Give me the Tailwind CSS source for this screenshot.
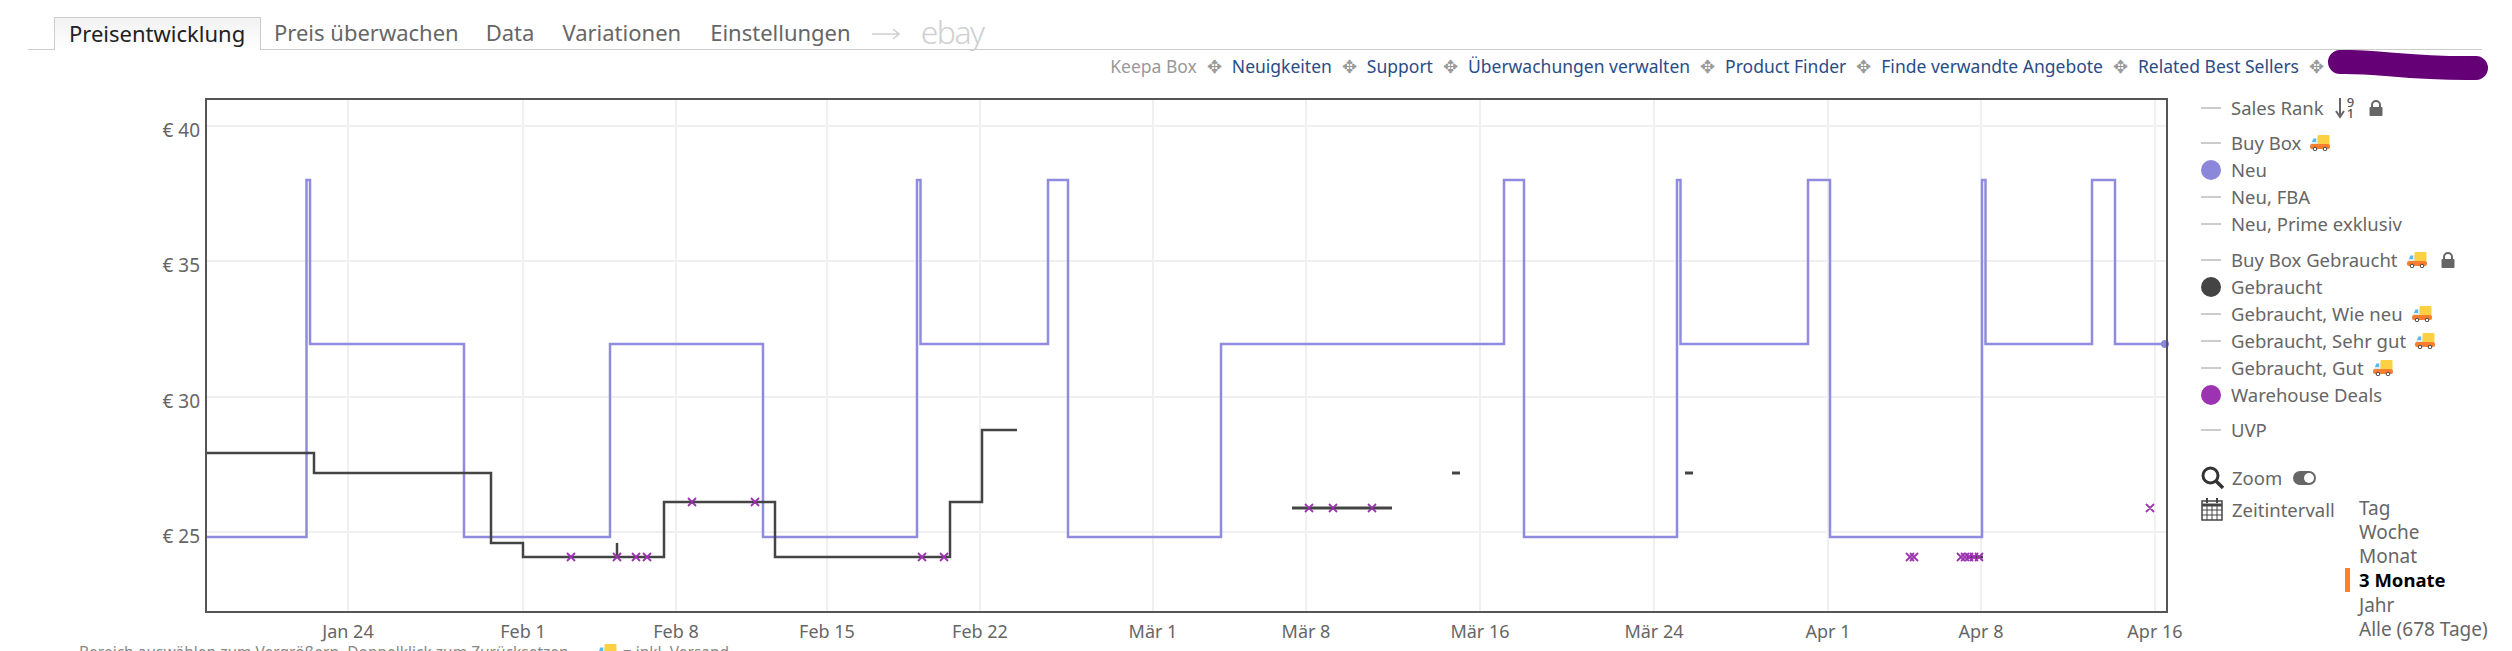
<!DOCTYPE html>
<html>
  <head>
    <title>Keepa Preisentwicklung</title>
    <script src="https://cdn.jsdelivr.net/npm/@tailwindcss/browser@4"></script>
  </head>
  <body class="h-[651px] w-[2512px] overflow-hidden bg-white font-['Noto_Sans',sans-serif] text-[#666]">
    <!-- truck and lock shared by the legend rows -->
    <svg class="hidden">
      <symbol id="truck" viewBox="0 0 20 16">
        <path d="M1 9l2-5.500h5V10H1z" fill="#d9eefa"/>
        <path d="M3.500 3.500H6V7H2z" fill="#5bb8ee"/>
        <rect x="7.500" y="0" width="12" height="9.500" rx="1" fill="#fbd143"/>
        <rect x="0" y="9" width="20" height="5" rx="2" fill="#f97f2e"/>
        <circle cx="5" cy="14" r="1.800" fill="#fff" stroke="#444"/>
        <circle cx="15" cy="14" r="1.800" fill="#fff" stroke="#444"/>
      </symbol>
      <symbol id="lock" viewBox="0 0 14 16">
        <path d="M3 7V5a4 4 0 0 1 8 0v2" fill="none" stroke="#666" stroke-width="2"/>
        <rect x="0.500" y="7" width="13" height="9" rx="1" fill="#666"/>
      </symbol>
    </svg>

    <!-- Tabs -->
    <div class="ml-[28px] mr-[30px] mt-[17px] flex h-[33px] items-end border-b border-[#ccc] text-[22px] leading-[30px]">
      <div class="ml-[26px] h-[33px] w-[207px] -mb-px border-x border-t border-[#ccc] bg-gradient-to-b from-[#f2f2f2] to-white pl-[14px] text-[#222]">Preisentwicklung</div>
      <div class="ml-[13px] h-[32px]">Preis überwachen</div>
      <div class="ml-[27px] h-[32px]">Data</div>
      <div class="ml-[28px] h-[32px]">Variationen</div>
      <div class="ml-[29px] h-[32px]">Einstellungen</div>
      <svg class="mb-[8px] ml-[21px]" width="28" height="14" viewBox="0 0 28 14"><path d="M0 7h26M21 2l6 5-6 5" fill="none" stroke="#d0d0d0" stroke-width="1.500"/></svg>
      <div class="ml-[21px] h-[32px] text-[32px] font-light tracking-[-1.500px] text-[#d0d0d0]">ebay</div>
    </div>

    <!-- Keepa links -->
    <div class="relative mr-[24px] flex h-[33px] items-center justify-end pr-[164px] text-[17.500px] text-[#2b4c87]">
      <span class="text-[#999]">Keepa Box</span>
      <span class="mx-[10px] text-[#999]">✥</span><span>Neuigkeiten</span>
      <span class="mx-[10px] text-[#999]">✥</span><span>Support</span>
      <span class="mx-[10px] text-[#999]">✥</span><span>Überwachungen verwalten</span>
      <span class="mx-[10px] text-[#999]">✥</span><span>Product Finder</span>
      <span class="mx-[10px] text-[#999]">✥</span><span>Finde verwandte Angebote</span>
      <span class="mx-[10px] text-[#999]">✥</span><span>Related Best Sellers</span>
      <span class="ml-[10px] text-[#999]">✥</span>
      <svg class="absolute right-0 top-0" width="160" height="32" viewBox="0 0 160 32"><path d="M12 12C50 11 80 19 148 18" fill="none" stroke="#660077" stroke-width="24" stroke-linecap="round"/></svg>
    </div>

    <div class="flex">
      <!-- Price graph -->
      <div class="relative h-[552px] w-[2190px] shrink-0">
        <svg class="absolute left-0 top-0" width="2190" height="552" viewBox="0 83 2190 552">
          <g stroke="#f0f0f0" stroke-width="2">
            <path d="M206 126H2167M206 261H2167M206 397H2167M206 532H2167"/>
            <path d="M348 99V612M523 99V612M676 99V612M827 99V612M980 99V612M1153 99V612M1306 99V612M1480 99V612M1654 99V612M1828 99V612M1981 99V612M2155 99V612"/>
          </g>
          <path d="M206 537H306.500V180H310V344H464V537H610V344H763V537H917V180H920.500V344H1048V180H1068V537H1221V344H1504V180H1524V537H1677V180H1680.500V344H1808V180H1830V537H1982V180H1985.500V344H2092V180H2115V344H2165" fill="none" stroke="#8f8ce0" stroke-width="2.500"/>
          <circle cx="2165" cy="344" r="4" fill="#8b88dc"/>
          <g fill="none" stroke="#444" stroke-width="2.500">
            <path d="M206 453H314V473H491V543H523V557H664V502H775V557H950V502H982V430H1017"/>
            <path d="M617 543V557"/>
            <path d="M1292 508H1392" stroke-width="3"/>
            <path d="M1452 473H1460M1685 473H1693M1967 557H1983" stroke-width="3"/>
          </g>
          <!-- warehouse deals markers -->
          <g fill="none" stroke="#9c33b0" stroke-width="1.800">
            <path d="M567 553l8 8m0-8l-8 8M613 553l8 8m0-8l-8 8M632 553l8 8m0-8l-8 8M643 553l8 8m0-8l-8 8M688 498l8 8m0-8l-8 8M751 498l8 8m0-8l-8 8M918 553l8 8m0-8l-8 8M940 553l8 8m0-8l-8 8"/>
            <path d="M1305 504l8 8m0-8l-8 8M1329 504l8 8m0-8l-8 8M1368 504l8 8m0-8l-8 8"/>
            <path d="M1906 553l8 8m0-8l-8 8M1910 553l8 8m0-8l-8 8M1957 553l8 8m0-8l-8 8M1961 553l8 8m0-8l-8 8M1965 553l8 8m0-8l-8 8M1970 553l8 8m0-8l-8 8M1975 553l8 8m0-8l-8 8M2146 504l8 8m0-8l-8 8"/>
          </g>
          <path d="M206 99H2167V612H206Z" fill="none" stroke="#555" stroke-width="2"/>
        </svg>
        <!-- axis labels sit on the chart canvas -->
        <span class="absolute right-[1990px] top-[33px] text-[19px] leading-[28px]">€ 40</span>
        <span class="absolute right-[1990px] top-[168px] text-[19px] leading-[28px]">€ 35</span>
        <span class="absolute right-[1990px] top-[304px] text-[19px] leading-[28px]">€ 30</span>
        <span class="absolute right-[1990px] top-[439px] text-[19px] leading-[28px]">€ 25</span>
        <span class="absolute left-[348px] top-[534px] -translate-x-1/2 whitespace-nowrap text-[18px] leading-[28px]">Jan 24</span>
        <span class="absolute left-[523px] top-[534px] -translate-x-1/2 whitespace-nowrap text-[18px] leading-[28px]">Feb 1</span>
        <span class="absolute left-[676px] top-[534px] -translate-x-1/2 whitespace-nowrap text-[18px] leading-[28px]">Feb 8</span>
        <span class="absolute left-[827px] top-[534px] -translate-x-1/2 whitespace-nowrap text-[18px] leading-[28px]">Feb 15</span>
        <span class="absolute left-[980px] top-[534px] -translate-x-1/2 whitespace-nowrap text-[18px] leading-[28px]">Feb 22</span>
        <span class="absolute left-[1153px] top-[534px] -translate-x-1/2 whitespace-nowrap text-[18px] leading-[28px]">Mär 1</span>
        <span class="absolute left-[1306px] top-[534px] -translate-x-1/2 whitespace-nowrap text-[18px] leading-[28px]">Mär 8</span>
        <span class="absolute left-[1480px] top-[534px] -translate-x-1/2 whitespace-nowrap text-[18px] leading-[28px]">Mär 16</span>
        <span class="absolute left-[1654px] top-[534px] -translate-x-1/2 whitespace-nowrap text-[18px] leading-[28px]">Mär 24</span>
        <span class="absolute left-[1828px] top-[534px] -translate-x-1/2 whitespace-nowrap text-[18px] leading-[28px]">Apr 1</span>
        <span class="absolute left-[1981px] top-[534px] -translate-x-1/2 whitespace-nowrap text-[18px] leading-[28px]">Apr 8</span>
        <span class="absolute left-[2155px] top-[534px] -translate-x-1/2 whitespace-nowrap text-[18px] leading-[28px]">Apr 16</span>
        <div class="absolute left-[79px] top-[558px] flex items-center whitespace-nowrap text-[15.500px] leading-[22px] text-[#888]">
          Bereich auswählen zum Vergrößern, Doppelklick zum Zurücksetzen.
          <svg class="ml-[24px] mr-[6px]" width="20" height="16"><use href="#truck"/></svg>= inkl. Versand
        </div>
      </div>

      <!-- Legend -->
      <div class="w-[322px] pl-[11px] pt-[11px] text-[18.500px] leading-[27px]">
        <div class="flex h-[27px] items-center"><i class="mr-[10px] h-[2px] w-[20px] bg-[#ccc]"></i>Sales Rank
          <svg class="ml-[10px]" width="12" height="22" viewBox="0 0 12 22"><path d="M6 1v17M2 14l4 6 4-6" fill="none" stroke="#666" stroke-width="2"/></svg>
          <span class="ml-px flex flex-col text-[13px] font-medium leading-[11px] text-[#555]"><span>9</span><span>1</span></span>
          <svg class="ml-[15px]" width="14" height="16"><use href="#lock"/></svg>
        </div>
        <div class="mt-[8px] flex h-[27px] items-center"><i class="mr-[10px] h-[2px] w-[20px] bg-[#ccc]"></i>Buy Box<svg class="ml-[9px]" width="20" height="16"><use href="#truck"/></svg></div>
        <div class="flex h-[27px] items-center"><i class="mr-[10px] h-[20px] w-[20px] rounded-full bg-[#8b88dc]"></i>Neu</div>
        <div class="flex h-[27px] items-center"><i class="mr-[10px] h-[2px] w-[20px] bg-[#ccc]"></i>Neu, FBA</div>
        <div class="flex h-[27px] items-center"><i class="mr-[10px] h-[2px] w-[20px] bg-[#ccc]"></i>Neu, Prime exklusiv</div>
        <div class="mt-[9px] flex h-[27px] items-center"><i class="mr-[10px] h-[2px] w-[20px] bg-[#ccc]"></i>Buy Box Gebraucht<svg class="ml-[9px]" width="20" height="16"><use href="#truck"/></svg><svg class="ml-[14px]" width="14" height="16"><use href="#lock"/></svg></div>
        <div class="flex h-[27px] items-center"><i class="mr-[10px] h-[20px] w-[20px] rounded-full bg-[#444]"></i>Gebraucht</div>
        <div class="flex h-[27px] items-center"><i class="mr-[10px] h-[2px] w-[20px] bg-[#ccc]"></i>Gebraucht, Wie neu<svg class="ml-[9px]" width="20" height="16"><use href="#truck"/></svg></div>
        <div class="flex h-[27px] items-center"><i class="mr-[10px] h-[2px] w-[20px] bg-[#ccc]"></i>Gebraucht, Sehr gut<svg class="ml-[9px]" width="20" height="16"><use href="#truck"/></svg></div>
        <div class="flex h-[27px] items-center"><i class="mr-[10px] h-[2px] w-[20px] bg-[#ccc]"></i>Gebraucht, Gut<svg class="ml-[9px]" width="20" height="16"><use href="#truck"/></svg></div>
        <div class="flex h-[27px] items-center"><i class="mr-[10px] h-[20px] w-[20px] rounded-full bg-[#9c33b0]"></i>Warehouse Deals</div>
        <div class="mt-[8px] flex h-[27px] items-center"><i class="mr-[10px] h-[2px] w-[20px] bg-[#ccc]"></i>UVP</div>

        <div class="mt-[21px] flex h-[27px] items-center">
          <svg class="mr-[8px] shrink-0" width="23" height="23" viewBox="0 0 23 23"><circle cx="9.500" cy="9.500" r="7.500" fill="none" stroke="#333" stroke-width="3"/><path d="M15 15l7 7" stroke="#333" stroke-width="3.500"/></svg>
          Zoom
          <span class="ml-[11px] flex h-[14px] w-[23px] items-center justify-end rounded-full bg-[#666] pr-[2px]"><i class="h-[10px] w-[10px] rounded-full bg-white"></i></span>
        </div>
        <div class="mt-[5px] flex">
          <div class="flex h-[27px] w-[158px] items-center">
            <svg class="mr-[9px] shrink-0" width="22" height="23" viewBox="0 0 22 23"><rect x="1" y="3" width="20" height="19" fill="none" stroke="#444" stroke-width="1.500"/><path d="M1 7h20" stroke="#444" stroke-width="3"/><path d="M1 12h20M1 17h20M6 8v14M11 8v14M16 8v14" stroke="#444"/><path d="M6 0v5M16 0v5" stroke="#444" stroke-width="2"/></svg>
            Zeitintervall
          </div>
          <div class="text-[19px] text-[#666]">
            <div class="h-[24px] leading-[24px]">Tag</div>
            <div class="h-[24px] leading-[24px]">Woche</div>
            <div class="h-[24px] leading-[24px]">Monat</div>
            <div class="relative h-[24px] text-[18.500px] font-bold leading-[24px] text-black"><i class="absolute -left-[14px] top-0 h-[24px] w-[5px] bg-[#ff7f2a]"></i>3 Monate</div>
            <div class="h-[24px] leading-[26px]">Jahr</div>
            <div class="h-[24px] whitespace-nowrap leading-[26px]">Alle (678 Tage)</div>
          </div>
        </div>
      </div>
    </div>
  </body>
</html>
